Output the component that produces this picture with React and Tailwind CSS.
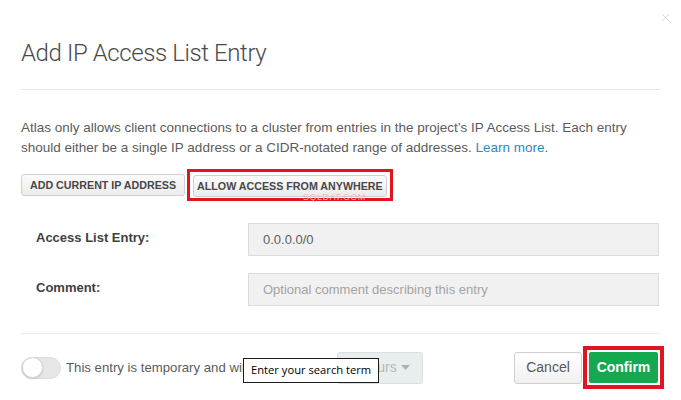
import { X } from "lucide-react";

const sans = "font-['Liberation_Sans',Arial,sans-serif]";

const FieldRow = ({ label, value, placeholder }) => (
  <div className="flex items-center">
    <div className="w-[227px] pl-[15px] pb-[3px] text-[13px] font-bold text-[#3f3f3f]">{label}</div>
    <div className="w-[411px] h-[33px] flex items-center px-[14px] bg-[#f1f1f1] border border-[#dcdcdc] text-[13px]">
      {value ? (
        <span className="text-[#5c5c5c]">{value}</span>
      ) : (
        <span className="text-[#a3a3a3]">{placeholder}</span>
      )}
    </div>
  </div>
);

const App = () => {
  return (
    <div className={`w-[681px] h-[400px] bg-white relative overflow-hidden ${sans}`}>
      {/* close */}
      <button className="absolute right-[9px] top-[11px] text-[#d0d0d0]">
        <X className="w-[13px] h-[13px]" strokeWidth={1.5} />
      </button>

      <div className="px-[21px]">
        <h1 className="pt-[39px] text-[24px] leading-[28px] font-light tracking-[-0.4px] text-[#494949] font-['Roboto',sans-serif]">
          Add IP Access List Entry
        </h1>
        <div className="mt-[22px] border-t border-[#e6e6e6]" />

        <p className="mt-[28px] text-[13.5px] leading-[20px] text-[#5b5b5b]">
          Atlas only allows client connections to a cluster from entries in the project’s IP Access List. Each entry
          should either be a single IP address or a CIDR-notated range of addresses.{" "}
          <span className="text-[#2b8ac4]">Learn more</span>.
        </p>

        {/* quick buttons */}
        <div className="mt-[11px] flex items-center relative">
          <button className="h-[22px] px-[8px] rounded-[3px] border border-[#cfcfcf] bg-gradient-to-b from-[#fbfbfb] to-[#ececec] text-[10.7px] font-bold text-[#474747]">
            ADD CURRENT IP ADDRESS
          </button>
          <div className="ml-[2px] border-[3px] border-[#e3141f] px-[3px] py-[1px]">
            <button className="h-[22px] px-[3px] rounded-[3px] border border-[#cfcfcf] bg-gradient-to-b from-[#fbfbfb] to-[#ececec] text-[10.7px] font-bold text-[#474747]">
              ALLOW ACCESS FROM ANYWHERE
            </button>
          </div>
          <span className="absolute left-[282px] top-[23px] text-[9px] leading-[10px] text-[#f2b9bb] tracking-[0.5px]">
            SQLDAT.COM
          </span>
        </div>

        {/* fields */}
        <div className="mt-[22px] flex flex-col gap-[17px]">
          <FieldRow label="Access List Entry:" value="0.0.0.0/0" />
          <FieldRow label="Comment:" placeholder="Optional comment describing this entry" />
        </div>

        <div className="mt-[27px] border-t border-[#ececec]" />

        {/* footer */}
        <div className="mt-[12px] flex items-center relative">
          <div className="w-[40px] h-[22px] rounded-full bg-[#e6e6e6] border border-[#dedede] flex items-center">
            <div className="w-[21px] h-[21px] rounded-full bg-white border border-[#d6d6d6] shadow-sm" />
          </div>
          <div className="ml-[5px] w-[271px] overflow-hidden whitespace-nowrap text-[13.2px] text-[#5b5b5b]">
            This entry is temporary and will be deleted in
          </div>
          <div className="w-[86px] h-[32px] rounded-[3px] bg-[#e8eded] border border-[#d9e0e0] flex items-center justify-between pl-[12px] pr-[12px] text-[14px] text-[#b3b9bb]">
            <span>6 hours</span>
            <svg width="9" height="5" viewBox="0 0 9 5" className="fill-[#aab2b4]">
              <path d="M0 0h9L4.5 5z" />
            </svg>
          </div>
          <div className="ml-auto flex items-center">
            <button className="h-[32px] w-[68px] rounded-[3px] border border-[#cfcfcf] bg-gradient-to-b from-white to-[#f0f0f0] text-[14px] text-[#585858]">
              Cancel
            </button>
            <div className="ml-[1px] -mr-[4px] border-[4px] border-[#e3141f] p-[2px]">
              <button className="h-[31px] w-[69px] rounded-[2px] bg-[#14a84f] text-[14px] font-bold text-white">
                Confirm
              </button>
            </div>
          </div>

          {/* tooltip */}
          <div className="absolute left-[222px] top-[12px] h-[25px] px-[7px] flex items-center bg-white border border-[#1c1c1c] text-[11.2px] text-black font-['Open_Sans',sans-serif]">
            Enter your search term
          </div>
        </div>
      </div>
    </div>
  );
};

export default App;
